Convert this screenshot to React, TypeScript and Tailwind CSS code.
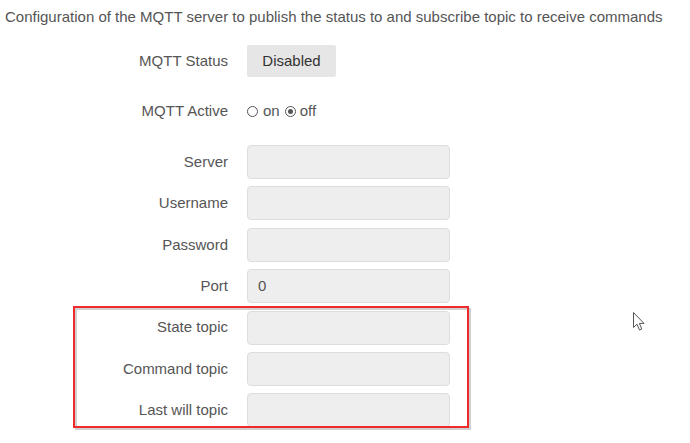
const fields = [
  { label: "Server", value: "" },
  { label: "Username", value: "" },
  { label: "Password", value: "" },
  { label: "Port", value: "0" },
  { label: "State topic", value: "" },
  { label: "Command topic", value: "" },
  { label: "Last will topic", value: "" },
];

function Radio({ checked }: { checked?: boolean }) {
  return (
    <span className="inline-flex w-[11px] h-[11px] rounded-full border border-[#555] items-center justify-center bg-white">
      {checked && <span className="w-[5px] h-[5px] rounded-full bg-[#555]" />}
    </span>
  );
}

export default function App() {
  return (
    <div className="relative w-[690px] h-[443px] bg-white text-[#555] text-[15px] font-['Liberation_Sans',Arial,sans-serif] overflow-hidden">
      <p className="pt-[8px] pl-[5px] leading-[18px]">
        Configuration of the MQTT server to publish the status to and subscribe topic to receive commands
      </p>

      <div className="flex items-center gap-[19px] mt-[19px]">
        <span className="w-[228px] text-right">MQTT Status</span>
        <span className="w-[89px] h-[32px] flex items-center justify-center bg-[#e6e6e6] text-[#333] rounded-[2px]">
          Disabled
        </span>
      </div>

      <div className="flex items-center gap-[19px] mt-[24px] h-[20px]">
        <span className="w-[228px] text-right">MQTT Active</span>
        <div className="flex items-center gap-[4px]">
          <Radio />
          <span className="ml-[1px] mr-[1px]">on</span>
          <Radio checked />
          <span>off</span>
        </div>
      </div>

      <div className="flex flex-col gap-[7.4px] mt-[24px]">
        {fields.map((f) => (
          <div key={f.label} className="flex items-center gap-[19px]">
            <span className="w-[228px] text-right">{f.label}</span>
            <div className="w-[203px] h-[34px] bg-[#eeeeee] border border-[#dddddd] rounded-[4px] flex items-center px-[10px]">
              {f.value}
            </div>
          </div>
        ))}
      </div>

      {/* annotation box */}
      <div className="absolute left-[73px] top-[306px] w-[396px] h-[122px] border-2 border-[#ee2a2a] shadow-[2px_2px_0_#cfcfcf,inset_2px_2px_0_#cfcfcf]" />

      {/* mouse cursor */}
      <svg className="absolute left-[633px] top-[312px]" width="13" height="20" viewBox="0 0 13 20">
        <path d="M0.5 0.5 L0.5 15.5 L4 12.2 L6.5 18 L8.8 17 L6.4 11.4 L11 11.4 Z" fill="#fff" stroke="#555" strokeWidth="1" strokeLinejoin="miter" />
      </svg>
    </div>
  );
}
